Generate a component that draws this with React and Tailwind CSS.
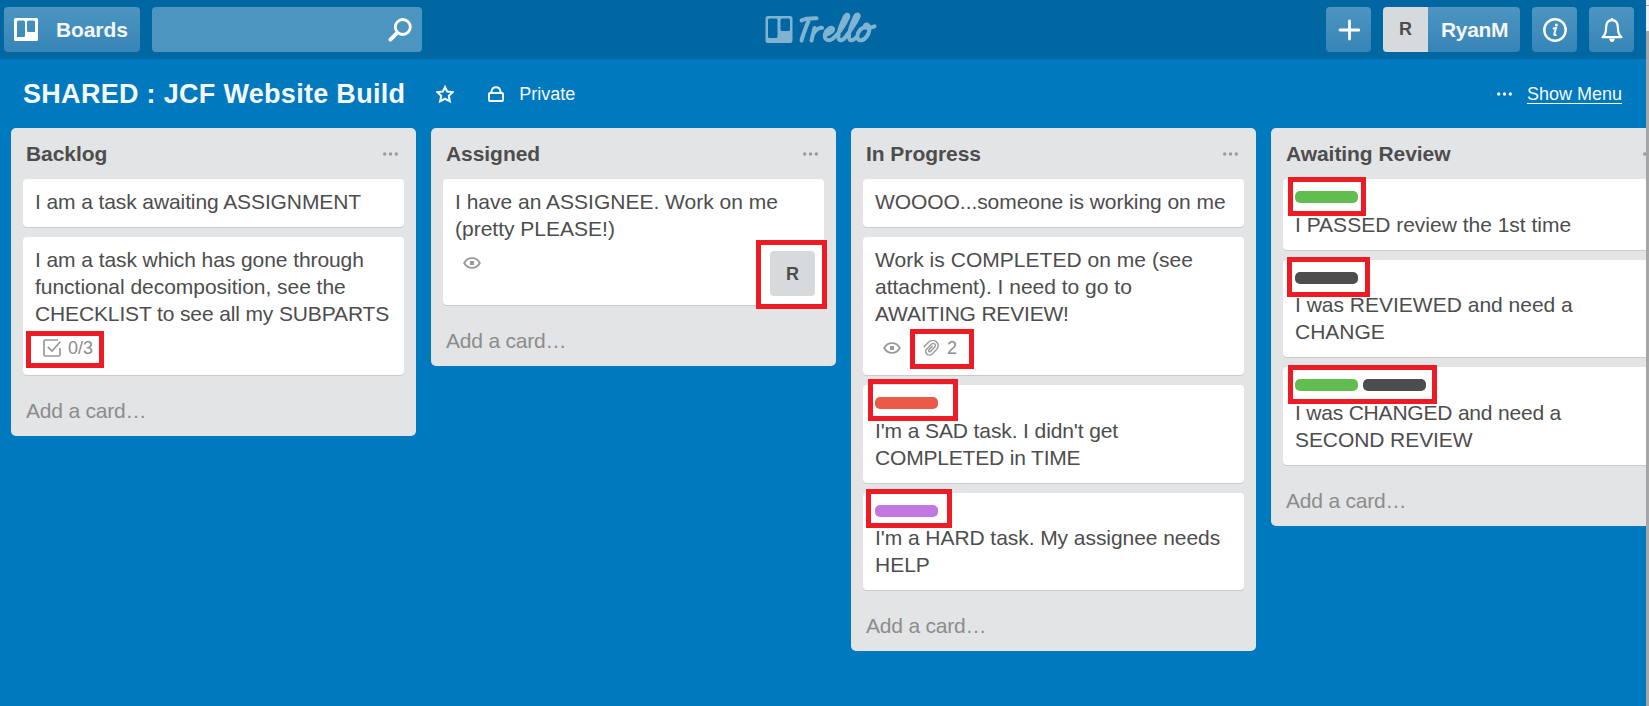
import React from "react";

const LABELS = {
  green: "bg-[#61bd4f]",
  dark: "bg-[#4d4d4d]",
  red: "bg-[#eb5a46]",
  purple: "bg-[#c377e0]",
};

const LISTS = [
  {
    title: "Backlog",
    cards: [
      { h: "h-[48px]", lines: [["I am a task awaiting ASSIGNMENT", "tracking-[-0.1px]"]] },
      {
        h: "h-[138px]",
        lines: [
          ["I am a task which has gone through", "tracking-[-0.08px]"],
          ["functional decomposition, see the", "tracking-[-0.03px]"],
          ["CHECKLIST to see all my SUBPARTS", "tracking-[-0.13px]"],
        ],
        checklist: "0/3",
      },
    ],
  },
  {
    title: "Assigned",
    cards: [
      {
        h: "h-[126px]",
        lines: [["I have an ASSIGNEE. Work on me"], ["(pretty PLEASE!)"]],
        watch: true,
        member: "R",
      },
    ],
  },
  {
    title: "In Progress",
    cards: [
      { h: "h-[48px]", lines: [["WOOOO...someone is working on me", "tracking-[-0.06px]"]] },
      {
        h: "h-[138px]",
        lines: [
          ["Work is COMPLETED on me (see", "tracking-[0.03px]"],
          ["attachment). I need to go to"],
          ["AWAITING REVIEW!", "tracking-[-0.19px]"],
        ],
        watch: true,
        files: "2",
      },
      {
        h: "h-[98px]",
        labels: ["red"],
        lines: [
          ["I'm a SAD task. I didn't get", "tracking-[-0.11px]"],
          ["COMPLETED in TIME", "tracking-[-0.18px]"],
        ],
      },
      {
        h: "h-[97px]",
        tight: true,
        labels: ["purple"],
        lines: [["I'm a HARD task. My assignee needs", "tracking-[-0.06px]"], ["HELP"]],
      },
    ],
  },
  {
    title: "Awaiting Review",
    cards: [
      { h: "h-[71px]", labels: ["green"], lines: [["I PASSED review the 1st time"]] },
      { h: "h-[97px]", tight: true, labels: ["dark"], lines: [["I was REVIEWED and need a"], ["CHANGE"]] },
      {
        h: "h-[98px]",
        labels: ["green", "dark"],
        lines: [
          ["I was CHANGED and need a", "tracking-[-0.2px]"],
          ["SECOND REVIEW", "tracking-[-0.08px]"],
        ],
      },
    ],
  },
];

const HIGHLIGHTS = [
  "left-[26px] top-[331px] w-[78px] h-[37px]",
  "left-[756px] top-[240px] w-[71px] h-[69px]",
  "left-[910px] top-[329px] w-[64px] h-[40px]",
  "left-[868px] top-[379px] w-[90px] h-[42px]",
  "left-[866px] top-[489px] w-[86px] h-[39px]",
  "left-[1288px] top-[177px] w-[78px] h-[39px]",
  "left-[1287px] top-[257px] w-[83px] h-[40px]",
  "left-[1288px] top-[365px] w-[149px] h-[39px]",
];

function Dots({ className }) {
  return (
    <svg viewBox="0 0 15 4" className={`h-[4px] w-[15px] shrink-0 ${className}`} fill="currentColor">
      <circle cx="1.7" cy="2" r="1.7" />
      <circle cx="7.5" cy="2" r="1.7" />
      <circle cx="13.3" cy="2" r="1.7" />
    </svg>
  );
}

function Eye() {
  return (
    <svg viewBox="0 0 18 12" className="h-[12px] w-[18px]" fill="none" stroke="#999" strokeWidth="1.9">
      <path d="M1.2 6C3 2.700 5.800 1.100 9 1.100S15 2.700 16.800 6C15 9.300 12.200 10.900 9 10.900S3 9.300 1.200 6Z" />
      <rect x="7" y="4" width="4" height="4" fill="#999" stroke="none" />
    </svg>
  );
}

function Check() {
  return (
    <svg viewBox="0 0 18 18" className="h-[18px] w-[18px]" fill="none" stroke="#999" strokeWidth="1.7">
      <path d="M15 1H2.300Q1 1 1 2.300V15.700Q1 17 2.300 17H15.700Q17 17 17 15.700V9" />
      <path d="M4.800 7.800L9 12L17.300 2.700" />
    </svg>
  );
}

function Clip() {
  return (
    <svg viewBox="0 0 16 16" className="h-[16px] w-[16px]" fill="none" stroke="#999" strokeWidth="1.4" strokeLinecap="round">
      <path d="M1 6.800L5.300 2.400C8 -0.200 11.400 0.200 13.200 1.600C15.600 3.600 15.800 7 13.800 9.200L9.200 13.900C7.400 15.600 5 15.400 3.700 14C2.400 12.600 2.400 10.400 3.900 8.900L8.400 4.300C9.400 3.300 10.900 3.300 11.700 4.100C12.500 4.900 12.500 6.200 11.600 7.200L7.500 11.400C6.400 12.300 5 11 6 9.800L9.400 6.300" />
    </svg>
  );
}

function Card({ card }) {
  return (
    <div className={`relative flex flex-col rounded-[4px] bg-white px-[12px] shadow-[0_1px_0_#c9cbcd] ${card.h}`}>
      {card.labels && (
        <div className={`flex gap-[5px] pt-[12px] ${card.tight ? "h-[22px]" : "h-[23px]"}`}>
          {card.labels.map((l) => (
            <span key={l} className={`h-[12px] w-[63px] rounded-[5px] ${LABELS[l]}`} />
          ))}
        </div>
      )}
      <div className="pt-[9px] text-[21px] leading-[27px] whitespace-nowrap text-[#4d4d4d]">
        {card.lines.map(([text, tracking]) => (
          <p key={text} className={tracking}>
            {text}
          </p>
        ))}
      </div>
      {(card.watch || card.checklist || card.files) && (
        <div className="flex h-[42px] items-center pb-px pl-[8px] text-[18px] leading-[20px] text-[#8c8c8c]">
          {card.watch && <Eye />}
          {card.files && (
            <span className="ml-[22px] flex items-center gap-[8px]">
              <Clip />
              <span className="pt-px">{card.files}</span>
            </span>
          )}
          {card.checklist && (
            <span className="flex items-center gap-[7px]">
              <Check />
              <span className="pt-px">{card.checklist}</span>
            </span>
          )}
        </div>
      )}
      {card.member && (
        <span className="absolute right-[9px] bottom-[9px] flex h-[45px] w-[45px] items-center justify-center rounded-[4px] bg-[#d6dadc] pt-px text-[18px] font-bold text-[#4d4d4d]">
          {card.member}
        </span>
      )}
    </div>
  );
}

function List({ list }) {
  return (
    <section className="w-[405px] shrink-0 rounded-[5px] bg-[#e2e4e6] px-[12px]">
      <header className="flex h-[51px] items-center justify-between pr-[6px] pl-[3px]">
        <h2 className="text-[21px] leading-[27px] font-bold tracking-[-0.06px] text-[#4d4d4d]">{list.title}</h2>
        <Dots className="text-[#999]" />
      </header>
      <div className="flex flex-col gap-[10px]">
        {list.cards.map((c) => (
          <Card key={c.lines[0][0]} card={c} />
        ))}
      </div>
      <div className="flex h-[61px] items-center pt-[9px] pl-[3px] text-[21px] leading-[27px] tracking-[-0.2px] text-[#8c8c8c]">
        Add a card…
      </div>
    </section>
  );
}

const BTN = "flex h-[45px] items-center rounded-[4px] bg-linear-to-b from-[#4d95c1] to-[#3585b7] text-white";

export default function App() {
  return (
    <div className="relative flex h-[706px] w-[1649px] overflow-hidden bg-[#0079bf] font-['Liberation_Sans',Arial,sans-serif]">
      <div className="flex w-[1646px] flex-col overflow-hidden">
        <nav className="flex h-[59px] shrink-0 items-center bg-[#0067a3] pr-[12px] pl-[4px]">
          <div className={`${BTN} w-[136px] pl-[10px]`}>
            <svg viewBox="0 0 24 24" className="h-[24px] w-[24px]">
              <path
                fill="#fff"
                fillRule="evenodd"
                d="M1.500 0H22.500Q24 0 24 1.500V21.500Q24 23 22.500 23H1.500Q0 23 0 21.500V1.500Q0 0 1.500 0ZM4.500 2.500Q3 2.500 3 4V19H9.500Q11 19 11 17.500V4Q11 2.500 9.500 2.500ZM14.500 2.500Q13 2.500 13 4V12.500Q13 14 14.500 14H21V4Q21 2.500 19.500 2.500Z"
              />
            </svg>
            <span className="ml-[18px] text-[21px] font-bold tracking-[-0.1px] text-[#f4f6f8]">Boards</span>
          </div>
          <div className="ml-[12px] flex h-[45px] w-[270px] items-center justify-end rounded-[4px] bg-[#4d95c1] pr-[10px]">
            <svg viewBox="0 0 24 24" className="h-[24px] w-[24px]" fill="none" stroke="#fff">
              <circle cx="14.800" cy="9" r="7.500" strokeWidth="2.800" />
              <path d="M8.900 15.200L2.400 21.600" strokeWidth="3.800" strokeLinecap="round" />
            </svg>
          </div>
          <div className="ml-[343px] flex h-[45px] items-start pt-[5px]">
            <svg viewBox="0 0 112 34" className="h-[34px] w-[112px]" fill="none" stroke="#80b3d1" strokeLinecap="round" strokeLinejoin="round">
              <path
                fill="#80b3d1"
                stroke="none"
                fillRule="evenodd"
                d="M3 4H25Q27.500 4 27.500 6.500V28.500Q27.500 31 25 31H3Q.5 31 .5 28.500V6.500Q.5 4 3 4ZM4.500 6.500Q3 6.500 3 8V24.500Q3 26 4.500 26H11Q12.500 26 12.500 24.500V8Q12.500 6.500 11 6.500ZM17 6.500Q15.500 6.500 15.500 8V17.500Q15.500 19 17 19H23.500Q25 19 25 17.500V8Q25 6.500 23.500 6.500Z"
              />
              <g strokeWidth="4">
                <path d="M36.500 8.500C40 6.500 46 6.200 51.500 6.300M44 7.500C41.500 14 38.500 21 36.500 28.500" />
                <path d="M49.500 16L46.500 28.500M48.500 21.500C51 17.500 53.500 15.500 57 15.800" />
                <path d="M60.500 22.500C65 21.500 68.500 19 68 16.800C67 14 61.500 17 60 22C59 28 63.500 30 68 26.500C74 21.500 80 12 83 5.500C84 2.500 81.500 1.500 80 4.500C76.500 11.500 73 20 73.300 25.500C74 30 78 28.500 80.500 25C86 18 91 10.500 93.500 5C94.500 2.200 91.500 1.500 90 4.500C86.500 12 83.500 20 84 25.500C84.800 30 88.500 28.500 91 25.500" />
                <path d="M101 15C96 15.500 92 20 92.300 25C93 30 98.500 29 101.800 24.500C105 20 105.500 14 102 12.500C99 12 99.500 16 103 16C106 16 107.500 15 109.500 14.300" />
              </g>
            </svg>
          </div>
          <div className="ml-auto flex gap-[12px]">
            <div className={`${BTN} w-[45px] justify-center`}>
              <svg viewBox="0 0 22 22" className="h-[22px] w-[22px]" stroke="#fff" strokeWidth="2.800" strokeLinecap="round">
                <path d="M11.500 2V20M2 11H21" />
              </svg>
            </div>
            <div className={`${BTN} w-[137px] overflow-hidden`}>
              <span className="flex h-[45px] w-[45px] items-center justify-center bg-[#d6dadc] text-[18px] font-bold text-[#4d4d4d]">R</span>
              <span className="ml-[13px] text-[21px] font-bold tracking-[-0.35px] text-[#f4f6f8]">RyanM</span>
            </div>
            <div className={`${BTN} w-[45px] justify-center`}>
              <svg viewBox="0 0 24 24" className="h-[24px] w-[24px]" fill="none" stroke="#fff">
                <circle cx="12" cy="12" r="10.700" strokeWidth="2.400" />
                <path d="M9.800 10.600L13 10L11.200 16.200Q11 17.800 13.500 16.600" strokeWidth="1.900" />
                <circle cx="13.300" cy="6.900" r="1.500" fill="#fff" stroke="none" />
              </svg>
            </div>
            <div className={`${BTN} w-[45px] justify-center`}>
              <svg viewBox="0 0 22 24" className="h-[24px] w-[22px]" fill="none" stroke="#fff" strokeWidth="2.200">
                <path d="M1.500 19.200C4.500 17 5 14.500 5 10.500C5 5 7 2.200 11 2.200S17 5 17 10.500C17 14.500 17.500 17 20.500 19.200Z" strokeLinejoin="round" />
                <path d="M8 20.500H14Q13 24 11 24T8 20.500Z" fill="#fff" stroke="none" />
                <path d="M11 0V2" />
              </svg>
            </div>
          </div>
        </nav>

        <div className="flex h-[69px] shrink-0 items-center pr-[24px] pl-[23px] text-[18px] text-[#f4f8fb]">
          <h1 className="text-[27px] leading-[36px] font-bold tracking-[0.3px]">SHARED : JCF Website Build</h1>
          <svg viewBox="0 0 18 18" className="ml-[31px] h-[18px] w-[18px]" fill="none" stroke="currentColor" strokeWidth="2.100">
            <path d="M9 2L11.200 6.600L16.600 7.200L12.800 10.800L13.800 16.200L9 13.700L4.200 16.200L5.200 10.800L1.400 7.200L6.800 6.600Z" />
          </svg>
          <svg viewBox="0 0 16 16" className="ml-[34px] h-[16px] w-[16px]" fill="none" stroke="currentColor" strokeWidth="2">
            <rect x="1" y="7" width="14" height="8" rx="1" />
            <path d="M3.500 7V5.500Q4 1.200 8 1.200T12.500 5.500V7" />
          </svg>
          <span className="ml-[15px] pt-px">Private</span>
          <Dots className="ml-auto" />
          <span className="ml-[15px] pt-px underline underline-offset-[3px]">Show Menu</span>
        </div>

        <main className="flex items-start gap-[15px] pl-[11px]">
          {LISTS.map((l) => (
            <List key={l.title} list={l} />
          ))}
        </main>
      </div>

      <aside className="flex w-[3px] flex-col bg-[#a6a6a6]">
        <div className="h-[5px] bg-[#f0f0f0]" />
        <div className="h-[1px] bg-[#a6a6a6]" />
        <div className="h-[25px] bg-[#f0f0f0]" />
      </aside>

      {HIGHLIGHTS.map((pos) => (
        <div key={pos} className={`absolute border-[5px] border-[#ed1c24] ${pos}`} />
      ))}
    </div>
  );
}
